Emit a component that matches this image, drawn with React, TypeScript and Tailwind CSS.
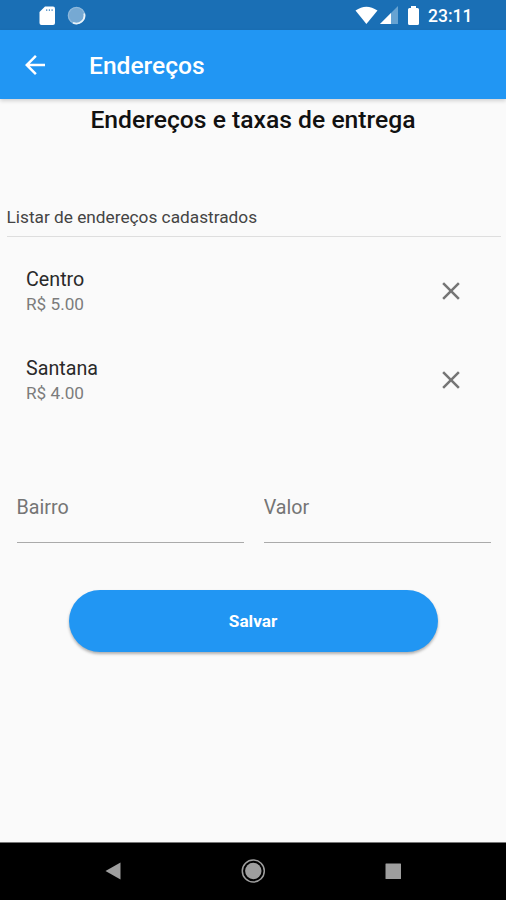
import { useState, FormEvent } from "react";

interface DeliveryAddress {
  id: number;
  district: string;
  fee: number;
}

const INITIAL_ADDRESSES: DeliveryAddress[] = [
  { id: 1, district: "Centro", fee: 5 },
  { id: 2, district: "Santana", fee: 4 },
];

function StatusBar() {
  return (
    <div className="flex h-[30px] shrink-0 items-center bg-[#1a6fb5] text-white">
      {/* SD card */}
      <svg className="ml-[39px] h-[19px] w-[17px]" viewBox="0 0 17 19" fill="none">
        <path d="M6 0.5H14Q16 0.5 16 2.5V17Q16 19 14 19H2.5Q0.5 19 0.5 17V6Z" fill="#fff" />
        <path d="M7.7 3.2V5M10.4 3.2V5M13.1 3.2V5" stroke="#5c98cb" strokeWidth="1.2" />
      </svg>
      {/* Sync spinner */}
      <svg className="ml-[11px] h-[19px] w-[19px]" viewBox="0 0 19 19" fill="none">
        <circle cx="9.5" cy="9.5" r="8.2" fill="#76a9d3" stroke="#8fb9dc" strokeWidth="1.2" />
        <path d="M17.2 7.5A8 8 0 0 1 6 16.7" stroke="#e9f3fa" strokeWidth="1.8" />
      </svg>

      {/* Wi-Fi */}
      <svg className="ml-auto h-[18px] w-[23px]" viewBox="0 0 23 18">
        <path d="M0.5 4.5Q11.3 -3.2 22.5 4.5L11.4 18Z" fill="#fff" />
      </svg>
      <svg className="ml-[2px] h-[18px] w-[18px]" viewBox="0 0 18 18">
        <path d="M0 18L18 0V18Z" fill="#67a3d2" />
        <path d="M0 18L11 7V18Z" fill="#fff" />
      </svg>
      <svg className="ml-[10px] h-[19px] w-[11px]" viewBox="0 0 11 19">
        <path d="M3 0H8V2H9.5Q11 2 11 3.5V17.5Q11 19 9.5 19H1.5Q0 19 0 17.5V3.5Q0 2 1.5 2H3Z" fill="#fff" />
      </svg>
      <span className="mt-[2px] mr-[34px] ml-[9px] w-[44px] text-[17.5px] leading-5 font-medium whitespace-nowrap">23:11</span>
    </div>
  );
}

function NavigationBar() {
  return (
    <nav className="flex h-[58px] shrink-0 items-center justify-between border-t border-[#777] bg-black px-[100px] pb-[2px]">
      <button type="button" aria-label="Voltar">
        <svg className="block h-[26px] w-[26px]" viewBox="0 0 26 26">
          <path d="M5.5 13L20.5 4.5V21.5Z" fill="#9e9e9e" />
        </svg>
      </button>
      <button type="button" aria-label="Início">
        <svg className="block h-[26px] w-[26px]" viewBox="0 0 26 26">
          <circle cx="13.3" cy="13" r="11" fill="none" stroke="#9e9e9e" strokeWidth="1.5" />
          <circle cx="13.3" cy="13" r="8.2" fill="#9e9e9e" />
        </svg>
      </button>
      <button type="button" aria-label="Recentes">
        <svg className="block h-[26px] w-[26px]" viewBox="0 0 26 26">
          <rect x="5.5" y="5.5" width="15.5" height="15.5" rx="0.5" fill="#9e9e9e" />
        </svg>
      </button>
    </nav>
  );
}

export default function App() {
  const [addresses, setAddresses] = useState<DeliveryAddress[]>(INITIAL_ADDRESSES);
  const [district, setDistrict] = useState<string>("");
  const [fee, setFee] = useState<string>("");

  const handleRemove = (id: number) => {
    setAddresses(addresses.filter((a) => a.id !== id));
  };

  const handleSave = (e: FormEvent) => {
    e.preventDefault();
    const value = Number(fee.replace(",", "."));
    if (!district.trim() || Number.isNaN(value)) return;
    setAddresses([...addresses, { id: Date.now(), district: district.trim(), fee: value }]);
    setDistrict("");
    setFee("");
  };

  return (
    <div className="flex h-[900px] w-[506px] flex-col overflow-hidden bg-[#fafafa] font-[Roboto,sans-serif]">
      <StatusBar />

      <header className="flex h-[69px] shrink-0 items-center bg-[#2196f3] text-white shadow-[0_2px_4px_rgba(0,0,0,0.16)]">
        <button type="button" aria-label="Voltar" className="ml-[20px]">
          <svg className="block h-[30px] w-[30px]" viewBox="0 0 24 24" fill="currentColor">
            <path d="M20 11H7.83l5.59-5.59L12 4l-8 8 8 8 1.41-1.41L7.83 13H20v-2z" />
          </svg>
        </button>
        <span className="mt-[2px] ml-[39px] text-[24.6px] leading-8 font-medium">Endereços</span>
      </header>

      <main className="flex-1">
        <h1 className="mt-[5px] text-center text-[24.7px] leading-8 font-medium text-[#111]">
          Endereços e taxas de entrega
        </h1>

        <h2 className="ml-[6.5px] mr-[5px] mt-[69px] border-b border-[#dedede] pb-[7px] text-[17.25px] leading-6 text-[#444]">
          Listar de endereços cadastrados
        </h2>

        <ul className="mt-[10px]">
          {addresses.map((a) => (
            <li key={a.id} className="flex h-[88.5px] items-center justify-between pr-[40px] pl-[26px]">
              <div className="pt-[1px]">
                <p className="text-[19.7px] leading-[25px] text-[#2a2a2a]">{a.district}</p>
                <p className="text-[17.2px] leading-6 text-[#7c7c7c]">R$ {a.fee.toFixed(2)}</p>
              </div>
              <button type="button" aria-label="Remover" onClick={() => handleRemove(a.id)}>
                <svg className="block h-[30px] w-[30px]" viewBox="0 0 24 24" fill="#757575">
                  <path d="M19 6.41L17.59 5 12 10.59 6.41 5 5 6.41 10.59 12 5 17.59 6.41 19 12 13.41 17.59 19 19 17.59 13.41 12z" />
                </svg>
              </button>
            </li>
          ))}
        </ul>

        <form onSubmit={handleSave}>
          <div className="mt-[60px] flex gap-[20px] pr-[15px] pl-[16.5px]">
            <input
              value={district}
              onChange={(e) => setDistrict(e.target.value)}
              placeholder="Bairro"
              className="h-[59px] w-0 flex-1 border-b-[1.5px] border-[#aaa] pb-[11px] text-[19.7px] text-[#222] outline-none placeholder:text-[#757575]"
            />
            <input
              value={fee}
              onChange={(e) => setFee(e.target.value)}
              placeholder="Valor"
              className="h-[59px] w-0 flex-1 border-b-[1.5px] border-[#aaa] pb-[11px] text-[19.7px] text-[#222] outline-none placeholder:text-[#757575]"
            />
          </div>
          <button
            type="submit"
            className="mx-auto mt-[47px] block h-[61.5px] w-[369px] rounded-full bg-[#2196f3] pt-[2px] text-[17.2px] font-bold text-white shadow-[0_2px_3px_rgba(0,0,0,0.3)]"
          >
            Salvar
          </button>
        </form>
      </main>

      <NavigationBar />
    </div>
  );
}
